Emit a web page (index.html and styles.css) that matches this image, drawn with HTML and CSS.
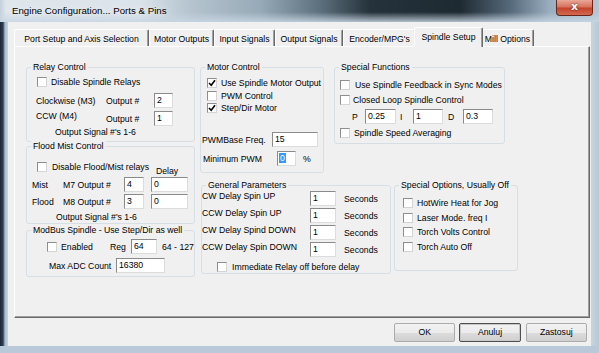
FILE: index.html
```html
<!DOCTYPE html>
<html lang="en">

<head>
    <meta charset="UTF-8">
    <title>Engine Configuration... Ports &amp; Pins</title>
    <link rel="stylesheet" href="styles.css">
</head>

<body>
    <div class="window">
        <!-- TITLE BAR -->
        <div class="titlebar">
            <span class="title">Engine Configuration... Ports &amp; Pins</span>
            <span class="close">x</span>
        </div>

        <div class="client">
            <!-- TABS -->
            <div class="tabs">
                <div class="tab t1">Port Setup and Axis Selection</div>
                <div class="tab t2">Motor Outputs</div>
                <div class="tab t3">Input Signals</div>
                <div class="tab t4">Output Signals</div>
                <div class="tab t5">Encoder/MPG's</div>
                <div class="tab t6 sel">Spindle Setup</div>
                <div class="tab t7">Mill Options</div>
            </div>

            <div class="panel">
                <div class="panel-body">
                    <!-- LEFT COLUMN -->
                    <div class="col1">
                        <div class="group relay">
                            <div class="legend">Relay Control</div>
                            <div class="row r1"><span class="cb"></span>Disable Spindle Relays</div>
                            <div class="row r2"><span class="lbl-a">Clockwise (M3)</span><span class="lbl-b">Output #</span><span class="inp w19">2</span></div>
                            <div class="row r3"><span class="lbl-a">CCW (M4)</span><span class="lbl-b">Output #</span><span class="inp w19">1</span></div>
                            <div class="row r4">Output Signal #'s 1-6</div>
                        </div>

                        <div class="group flood">
                            <div class="legend">Flood Mist Control</div>
                            <div class="row r1"><span class="cb"></span><span class="txt">Disable Flood/Mist relays</span><span class="delay">Delay</span></div>
                            <div class="row r2"><span class="lbl-a">Mist</span><span class="lbl-b">M7 Output #</span><span class="inp w20">4</span><span class="inp w37">0</span></div>
                            <div class="row r3"><span class="lbl-a">Flood</span><span class="lbl-b">M8 Output #</span><span class="inp w20">3</span><span class="inp w37">0</span></div>
                            <div class="row r4">Output Signal #'s 1-6</div>
                        </div>

                        <div class="group modbus">
                            <div class="legend">ModBus Spindle - Use Step/Dir as well</div>
                            <div class="row r1"><span class="cb"></span><span class="lbl-a">Enabled</span><span class="lbl-b">Reg</span><span class="inp w26">64</span><span class="range">64 - 127</span></div>
                            <div class="row r2"><span class="lbl-a">Max ADC Count</span><span class="inp w49">16380</span></div>
                        </div>
                    </div>

                    <!-- RIGHT AREA -->
                    <div class="right">
                        <div class="line1">
                            <div class="group motor">
                                <div class="legend">Motor Control</div>
                                <div class="row r1"><span class="cb on"><svg viewBox="0 0 8 8"><path d="M1 4 L3.2 6.3 L7 1.3"/></svg></span>Use Spindle Motor Output</div>
                                <div class="row r2"><span class="cb"></span>PWM Control</div>
                                <div class="row r3"><span class="cb on"><svg viewBox="0 0 8 8"><path d="M1 4 L3.2 6.3 L7 1.3"/></svg></span>Step/Dir Motor</div>
                                <div class="row r4"><span class="lbl-a">PWMBase Freq.</span><span class="inp w46">15</span></div>
                                <div class="row r5"><span class="lbl-a">Minimum PWM</span><span class="inp w19"><span class="selected">0</span></span><span class="pct">%</span></div>
                            </div>

                            <div class="group special">
                                <div class="legend">Special Functions</div>
                                <div class="row r1"><span class="cb"></span><span class="clip">Use Spindle Feedback in Sync Modes</span></div>
                                <div class="row r2"><span class="cb"></span>Closed Loop Spindle Control</div>
                                <div class="row r3"><span class="pl p">P</span><span class="inp w31">0.25</span><span class="pl i">I</span><span class="inp w30">1</span><span class="pl d">D</span><span class="inp w30">0.3</span></div>
                                <div class="row r4"><span class="cb"></span>Spindle Speed Averaging</div>
                            </div>
                        </div>

                        <div class="line2">
                            <div class="group general">
                                <div class="legend">General Parameters</div>
                                <div class="row p1"><span class="lbl-a">CW Delay Spin UP</span><span class="inp w26">1</span><span class="sec">Seconds</span></div>
                                <div class="row p2"><span class="lbl-a">CCW Delay Spin UP</span><span class="inp w26">1</span><span class="sec">Seconds</span></div>
                                <div class="row p2"><span class="lbl-a">CW Delay Spind DOWN</span><span class="inp w26">1</span><span class="sec">Seconds</span></div>
                                <div class="row p2"><span class="lbl-a">CCW Delay Spin DOWN</span><span class="inp w26">1</span><span class="sec">Seconds</span></div>
                                <div class="row p5"><span class="cb"></span>Immediate Relay off before delay</div>
                            </div>

                            <div class="group options">
                                <div class="legend">Special Options, Usually Off</div>
                                <div class="row o1"><span class="cb"></span>HotWire Heat for Jog</div>
                                <div class="row o2"><span class="cb"></span>Laser Mode. freq I</div>
                                <div class="row o3"><span class="cb"></span>Torch Volts Control</div>
                                <div class="row o2"><span class="cb"></span>Torch Auto Off</div>
                            </div>
                        </div>
                    </div>
                </div>
            </div>

            <!-- BUTTONS -->
            <div class="buttons">
                <span class="btn">OK</span>
                <span class="btn focus">Anuluj</span>
                <span class="btn">Zastosuj</span>
            </div>
        </div>
    </div>
</body>

</html>
```

FILE: styles.css
```css
* {
    margin: 0;
    padding: 0;
    box-sizing: border-box;
}

body {
    width: 599px;
    height: 353px;
    overflow: hidden;
    font-family: "Liberation Sans", Arial, sans-serif;
    font-size: 8.7px;
    color: #000;
    background: #1c2834;
}

/* WINDOW FRAME */
.window {
    width: 599px;
    height: 353px;
    background:
        linear-gradient(to right, #1b2736 0, #2d3f52 3px, #a9bccd 5px, #c6d4e1 8px, #c6d4e1 591px, #b8c8d6 599px);
    border-bottom: 7px solid #b9c9d9;
}

.titlebar {
    height: 22px;
    display: flex;
    align-items: flex-start;
    background:
        linear-gradient(to bottom, rgba(215, 226, 236, 0) 55%, rgba(200, 214, 227, 0.85) 100%),
        linear-gradient(to right, #c4d0db 0, #dfe6ec 6px, #dbe3ea 140px, #b5c4cf 190px, #97aab7 260px, #5d707d 320px, #25323b 370px, #1e2a32 460px, #56697a 510px, #9aaebf 550px, #b6c6d4 599px);
}

.title {
    margin: 5px 0 0 12px;
    font-size: 9.7px;
    line-height: 12px;
    color: #000;
    text-shadow: 0 0 6px rgba(255, 255, 255, 0.9);
}

.close {
    margin-left: auto;
    margin-right: 6px;
    width: 37px;
    height: 16px;
    border: 1px solid #6a2518;
    border-top: none;
    border-radius: 0 0 4px 4px;
    background: linear-gradient(#e8a898, #d8735e 45%, #c4442c 55%, #d26a4f);
    color: #fff;
    font-family: "DejaVu Sans", sans-serif;
    font-weight: bold;
    font-size: 11px;
    line-height: 13px;
    text-align: center;
    text-shadow: 0 0 2px #5a1a10;
}

.client {
    margin-left: 8px;
    width: 583px;
    height: 324px;
    background: #f0f0f0;
    padding-top: 7px;
}

/* TABS */
.tabs {
    display: flex;
    align-items: flex-start;
    height: 17px;
    margin-left: 6px;
}

.tab {
    height: 17px;
    padding-top: 3px;
    line-height: 13px;
    text-align: center;
    white-space: nowrap;
    background: #f0f0f0;
    border-top: 1px solid #fff;
    border-left: 1px solid #fff;
    border-right: 1px solid #696969;
    box-shadow: inset -1px 0 #a0a0a0;
    border-radius: 2px 2px 0 0;
}

.t1 { width: 135px; }
.t2 { width: 65px; }
.t3 { width: 61px; }
.t4 { width: 68px; }
.t5 { width: 73px; }
.t7 { width: 53px; }

.tab.sel {
    width: 69px;
    height: 20px;
    margin: -2px -2px 0 -2px;
    position: relative;
    z-index: 2;
}

.panel {
    margin-left: 6px;
    width: 576px;
    height: 272px;
    border: 1px solid;
    border-color: #fff #696969 #696969 #fff;
    box-shadow: inset -1px -1px #a0a0a0;
}

.panel-body {
    display: flex;
    align-items: flex-start;
    padding: 20px 0 0 11px;
}

/* GROUP BOXES */
.group {
    border: 1px solid #d5dfe5;
    border-radius: 3px;
}

.legend {
    width: fit-content;
    margin: -6px 0 0 4px;
    padding: 0 2px;
    line-height: 11px;
    background: #f0f0f0;
    white-space: nowrap;
}

.row {
    display: flex;
    align-items: center;
    white-space: nowrap;
}

.cb {
    flex: none;
    width: 10px;
    height: 10px;
    margin-right: 4px;
    background: #fff;
    border: 1px solid;
    border-color: #8e8e8e #d4d4d4 #d4d4d4 #8e8e8e;
    display: flex;
}

.cb svg {
    width: 8px;
    height: 8px;
}

.cb svg path {
    fill: none;
    stroke: #000;
    stroke-width: 1.6;
}

.inp {
    flex: none;
    height: 15px;
    padding-left: 2px;
    line-height: 13px;
    background: #fff;
    border: 1px solid;
    border-color: #8a8a8a #dcdcdc #dcdcdc #8a8a8a;
    overflow: hidden;
}

.w19 { width: 19px; }
.w20 { width: 20px; }
.w26 { width: 26px; }
.w30 { width: 30px; }
.w31 { width: 31px; }
.w37 { width: 37px; margin-left: 7px; }
.w46 { width: 46px; }
.w49 { width: 49px; }

/* RELAY CONTROL */
.col1 {
    width: 169px;
    flex: none;
}

.relay { height: 75px; }
.relay .r1 { margin-top: 3px; height: 12px; padding-left: 10px; }
.relay .r2 { margin-top: 5px; height: 15px; padding-left: 9px; }
.relay .r3 { margin-top: 3px; height: 15px; padding-left: 9px; }
.relay .r4 { margin-top: 0; height: 11px; padding-left: 28px; }
.relay .lbl-a { width: 70px; }
.relay .lbl-b { width: 48px; }
.relay .r3 .lbl-a { align-self: flex-start; }

/* FLOOD MIST */
.flood { height: 78px; margin-top: 4px; }
.flood .r1 { margin-top: 8px; height: 17px; padding-left: 10px; align-items: flex-start; }
.flood .r1 .cb { margin-top: 2px; margin-right: 5px; }
.flood .r1 .txt { width: 104px; line-height: 14px; }
.flood .delay { align-self: flex-end; line-height: 11px; }
.flood .r2 { height: 15px; padding-left: 5px; }
.flood .r3 { margin-top: 2px; height: 15px; padding-left: 5px; }
.flood .r4 { margin-top: 2px; height: 11px; padding-left: 29px; }
.flood .lbl-a { width: 31px; }
.flood .lbl-b { width: 61px; }

/* MODBUS */
.modbus { height: 47px; margin-top: 6px; }
.modbus .r1 { margin-top: 3px; height: 15px; padding-left: 20px; }
.modbus .r1 .lbl-a { width: 49px; }
.modbus .r1 .lbl-b { width: 21px; }
.modbus .range { margin-left: 5px; }
.modbus .r2 { margin-top: 4px; height: 15px; padding-left: 22px; }
.modbus .r2 .lbl-a { width: 67px; }

/* RIGHT AREA */
.right {
    margin-left: 5px;
}

.line1,
.line2 {
    display: flex;
    align-items: flex-start;
}

.line2 {
    margin-top: 12px;
}

/* MOTOR CONTROL */
.motor { width: 124px; height: 106px; }
.motor .r1 { margin-top: 4px; height: 12px; padding-left: 6px; }
.motor .r2 { margin-top: 1px; height: 12px; padding-left: 6px; }
.motor .r3 { height: 12px; padding-left: 6px; }
.motor .r4 { margin-top: 18px; height: 15px; padding-left: 1px; }
.motor .r4 .lbl-a { width: 70px; }
.motor .r5 { margin-top: 4px; height: 15px; padding-left: 2px; }
.motor .r5 .lbl-a { width: 74px; }
.motor .r5 .inp { padding-left: 1px; }
.motor .pct { margin-left: 7px; }

.selected {
    background: #3399ff;
    color: #fff;
    padding: 0 1px;
}

/* SPECIAL FUNCTIONS */
.special { width: 171px; height: 77px; margin-left: 10px; }
.special .r1 { margin-top: 5px; height: 13px; padding-left: 5px; }
.special .r1 .cb { margin-right: 5px; }
.special .clip { width: 147px; overflow: hidden; }
.special .r2 { margin-top: 2px; height: 13px; padding-left: 5px; }
.special .r2 .cb { margin-right: 3px; }
.special .r3 { margin-top: 3px; height: 15px; padding-left: 17px; }
.special .r4 { margin-top: 2px; height: 13px; padding-left: 5px; }
.special .pl.p { width: 13px; }
.special .pl.i { width: 13px; margin-left: 4px; }
.special .pl.d { width: 15px; margin-left: 5px; }

/* GENERAL PARAMETERS */
.general { width: 190px; height: 89px; margin-left: 1px; }
.general .p1,
.general .p2 { height: 15px; }
.general .p2 { margin-top: 2px; }
.general .lbl-a { width: 108px; align-self: flex-start; line-height: 10px; }
.general .sec { margin-left: 8px; }
.general .p5 { margin-top: 3px; height: 13px; padding-left: 15px; }
.general .p5 .cb { margin-right: 5px; }

/* SPECIAL OPTIONS */
.options { width: 124px; height: 86px; margin-left: 3px; }
.options .row { height: 14px; padding-left: 8px; }
.options .o1 { margin-top: 5px; }
.options .o2 { margin-top: 1px; }

/* BUTTONS */
.buttons {
    display: flex;
    margin-top: 5px;
    padding-left: 386px;
}

.btn {
    width: 62px;
    height: 19px;
    margin-right: 4px;
    line-height: 17px;
    text-align: center;
    border: 1px solid #acacac;
    border-radius: 2px;
    background: linear-gradient(#f2f2f2, #ebebeb 50%, #dddddd 51%, #cfcfcf);
}

.btn.focus {
    border-color: #4f4f4f;
    box-shadow: inset 0 0 0 1px #c8c8c8;
    margin-right: 5px;
}
```
